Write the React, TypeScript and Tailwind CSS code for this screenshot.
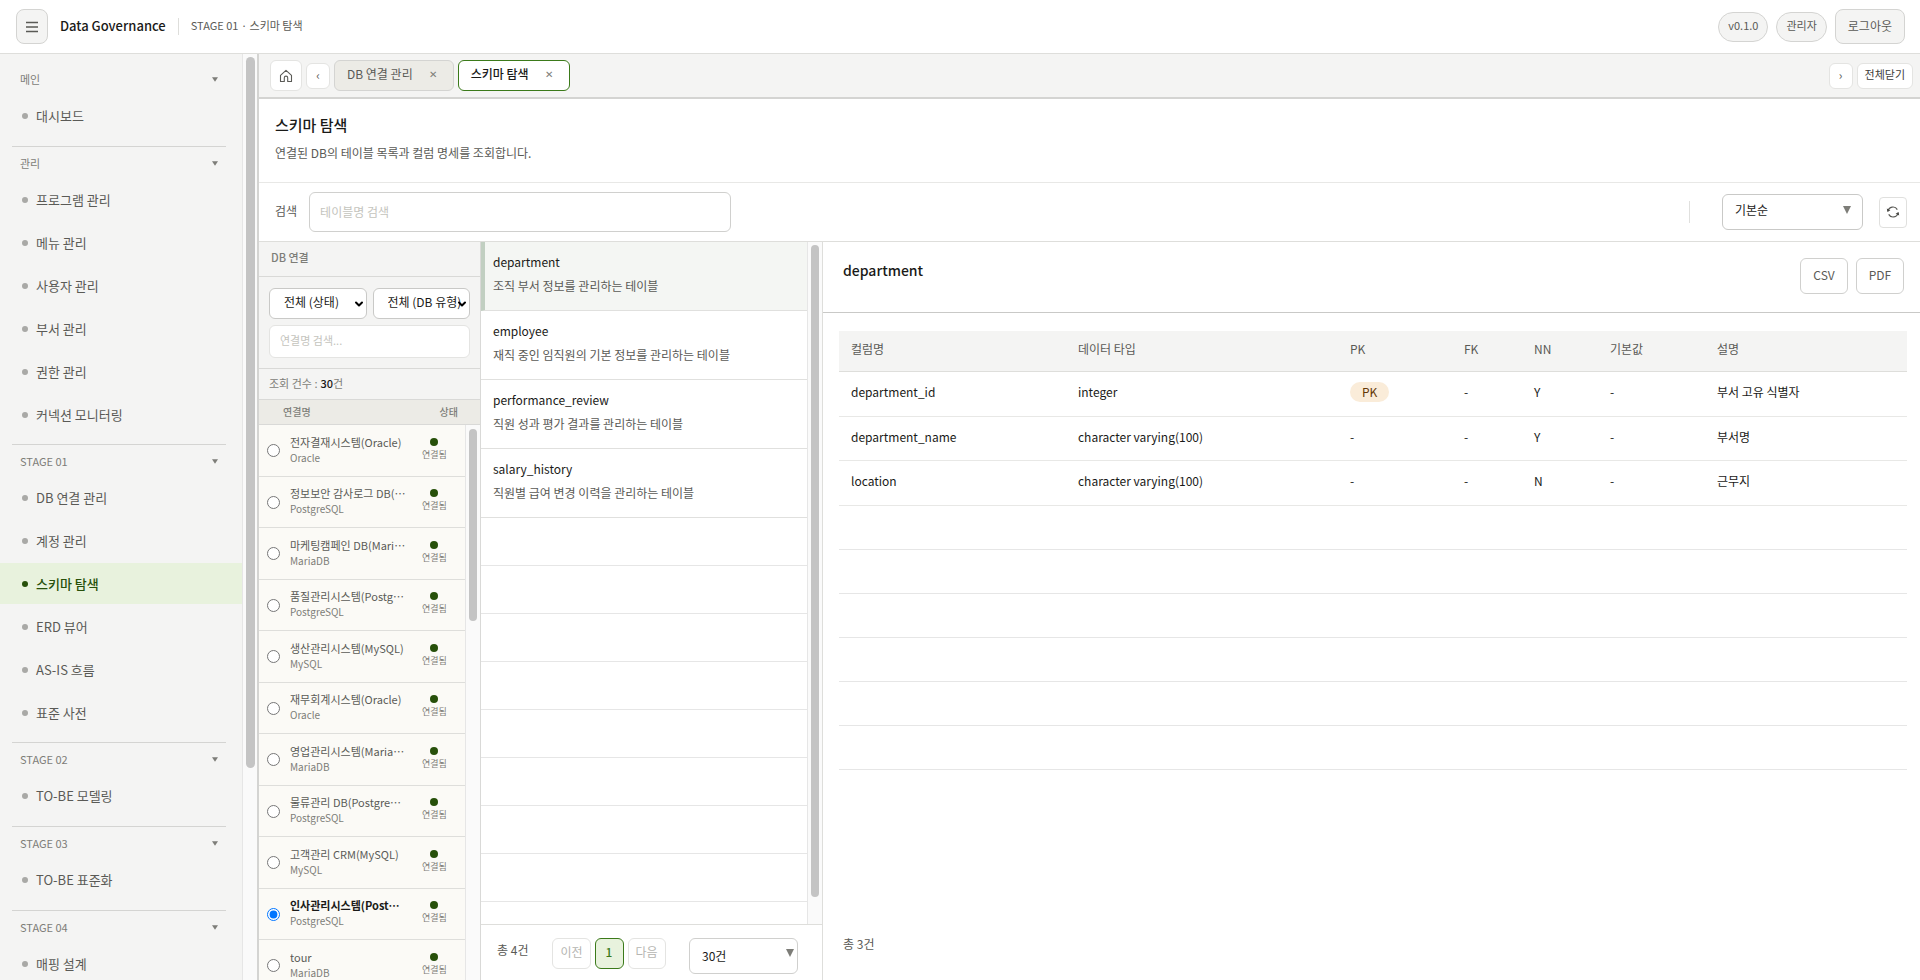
import { ChevronDown } from 'lucide-react';

const MENU = [
  { label: '메인', items: ['대시보드'] },
  {
    label: '관리',
    items: ['프로그램 관리', '메뉴 관리', '사용자 관리', '부서 관리', '권한 관리', '커넥션 모니터링'],
  },
  {
    label: 'STAGE 01',
    items: ['DB 연결 관리', '계정 관리', '스키마 탐색', 'ERD 뷰어', 'AS-IS 흐름', '표준 사전'],
  },
  { label: 'STAGE 02', items: ['TO-BE 모델링'] },
  { label: 'STAGE 03', items: ['TO-BE 표준화'] },
  { label: 'STAGE 04', items: ['매핑 설계'] },
];

const CONNECTIONS = [
  { name: '전자결재시스템(Oracle)', type: 'Oracle' },
  { name: '정보보안 감사로그 DB(PostgreSQL)', type: 'PostgreSQL' },
  { name: '마케팅캠페인 DB(MariaDB)', type: 'MariaDB' },
  { name: '품질관리시스템(PostgreSQL)', type: 'PostgreSQL' },
  { name: '생산관리시스템(MySQL)', type: 'MySQL' },
  { name: '재무회계시스템(Oracle)', type: 'Oracle' },
  { name: '영업관리시스템(MariaDB)', type: 'MariaDB' },
  { name: '물류관리 DB(PostgreSQL)', type: 'PostgreSQL' },
  { name: '고객관리 CRM(MySQL)', type: 'MySQL' },
  { name: '인사관리시스템(PostgreSQL)', type: 'PostgreSQL' },
  { name: 'tour', type: 'MariaDB' },
];

const TABLES = [
  { name: 'department', desc: '조직 부서 정보를 관리하는 테이블' },
  { name: 'employee', desc: '재직 중인 임직원의 기본 정보를 관리하는 테이블' },
  { name: 'performance_review', desc: '직원 성과 평가 결과를 관리하는 테이블' },
  { name: 'salary_history', desc: '직원별 급여 변경 이력을 관리하는 테이블' },
];

const COLUMNS = [
  { name: 'department_id', type: 'integer', pk: true, nn: 'Y', desc: '부서 고유 식별자' },
  { name: 'department_name', type: 'character varying(100)', pk: false, nn: 'Y', desc: '부서명' },
  { name: 'location', type: 'character varying(100)', pk: false, nn: 'N', desc: '근무지' },
];

function Sidebar() {
  return (
    <aside className="flex w-[257px] shrink-0 bg-[#f4f4f3]">
      <nav className="flex-1 overflow-hidden pt-2">
        {MENU.map((group, i) => (
          <div key={group.label} className={group.items.length > 1 ? 'pb-[9px]' : 'pb-[10px]'}>
            <div className={i > 0 ? 'ml-3 mr-4 border-t border-[#d4d4d2]' : 'ml-3 mr-4 border-t border-transparent'}>
              <button className="flex h-8 w-full items-center justify-between px-2 text-[11px] text-[#7d7d78]">
                {group.label}
                <svg viewBox="0 0 8 6" className="h-[5px] w-[6px] fill-[#7d7d78]">
                  <path d="M0 0h8L4 6z" />
                </svg>
              </button>
            </div>
            <ul className="flex flex-col gap-[2px]">
              {group.items.map((item) => {
                const active = item === '스키마 탐색';
                return (
                  <li key={item}>
                    <a
                      href="#"
                      className={`flex h-[41px] items-center gap-2 pl-[22px] text-[13px] ${
                        active ? 'bg-[#e8f2dd] font-medium text-[#27500a]' : 'text-[#5a5a56]'
                      }`}
                    >
                      <span className={`size-[6px] rounded-full ${active ? 'bg-[#27500a]' : 'bg-[#a9a9a6]'}`} />
                      {item}
                    </a>
                  </li>
                );
              })}
            </ul>
          </div>
        ))}
      </nav>
      <div className="w-[15px] shrink-0 border-l border-[#e6e6e6] bg-[#fafafa] pt-[3px] pl-[3px]">
        <div className="h-[77%] w-[9px] rounded-full bg-[#c4c4c4]" />
      </div>
    </aside>
  );
}

function TabBar() {
  return (
    <div className="flex h-[45px] shrink-0 items-center gap-1 border-b-2 border-[#d4d4d2] bg-[#f4f4f3] pl-[11px] pr-[7px]">
      <button aria-label="홈" className="flex h-[31px] w-8 items-center justify-center rounded-md border border-[#e4e4e2] bg-white">
        <svg viewBox="0 0 14 14" className="size-[14px] fill-none stroke-[#5a5a56]" strokeWidth="1.1" strokeLinejoin="round" strokeLinecap="round">
          <path d="M1.5 6.3 7 1.3l5.5 5v6.2H8.7V8.8a1.7 1.7 0 0 0-3.4 0v3.7H1.5z" />
        </svg>
      </button>
      <button className="flex h-[26px] w-[24px] items-center justify-center rounded-md border border-[#e4e4e2] bg-white pb-[2px] text-xs text-[#5a5a56]">‹</button>
      <div className="flex h-[31px] items-center gap-4 rounded-md border border-[#d4d4d2] bg-[#ecebe6] pb-[3px] pl-3 pr-4 text-xs text-[#5a5a56]">
        DB 연결 관리
        <button aria-label="DB 연결 관리 닫기" className="text-[10px] text-[#7d7d78]">✕</button>
      </div>
      <div className="flex h-[31px] items-center gap-4 rounded-md border border-[#3b7a1a] bg-white pb-[3px] pl-3 pr-4 text-xs font-medium text-[#1a1a18]">
        스키마 탐색
        <button aria-label="스키마 탐색 닫기" className="text-[10px] font-normal text-[#7d7d78]">✕</button>
      </div>
      <button className="ml-auto flex h-[26px] w-[24px] items-center justify-center rounded-md border border-[#e4e4e2] bg-white pb-[2px] text-xs text-[#5a5a56]">›</button>
      <button className="h-[26px] rounded-md border border-[#e4e4e2] bg-white px-[7px] pb-[3px] text-[11px] text-[#3c3c39]">전체닫기</button>
    </div>
  );
}

function Connections() {
  return (
    <section className="flex w-[222px] shrink-0 flex-col border-r border-[#d9d9d7] bg-[#f4f4f3]">
      <h2 className="flex h-[35px] shrink-0 items-center border-b border-[#d9d9d7] pb-1 pl-3 text-[11px] font-medium text-[#7d7d78]">DB 연결</h2>
      <div className="grid shrink-0 grid-cols-2 gap-[6px] border-b border-[#d9d9d7] px-[10px] pt-[11px] pb-[10px]">
        {['전체 (상태)', '전체 (DB 유형)'].map((label) => (
          <div key={label} className="relative">
            <select aria-label={label} className="h-[31px] w-full appearance-none rounded-md border border-[#c9c9c7] bg-white pb-[3px] pl-[14px] text-xs text-[#1a1a18]">
              <option>{label}</option>
            </select>
            <ChevronDown className="pointer-events-none absolute top-[10px] right-[2px] size-3 text-black" strokeWidth={4} />
          </div>
        ))}
        <input
          aria-label="연결명 검색"
          placeholder="연결명 검색..."
          className="col-span-2 h-[33px] w-full rounded-md border border-[#e4e4e2] bg-white px-[10px] pb-[3px] text-[11px] placeholder:text-[#c4c4bd]"
        />
      </div>
      <p className="flex h-[31px] shrink-0 items-center border-b border-[#d9d9d7] pb-px pl-[10px] text-[11px] text-[#7d7d78]">
        조회 건수 : <strong className="ml-[3px] font-medium text-[#1a1a18]">30</strong>건
      </p>
      <div className="flex h-[25px] shrink-0 items-center justify-between border-b border-[#d9d9d7] bg-[#ecebe6] pb-[2px] pl-6 pr-[22px] text-[10px] font-medium text-[#7d7d78]">
        <span>연결명</span>
        <span>상태</span>
      </div>
      <div className="flex min-h-0 flex-1">
        <ul className="min-w-0 flex-1 overflow-hidden bg-[#fbfaf6]">
          {CONNECTIONS.map((c) => {
            const checked = c.name.startsWith('인사');
            return (
              <li key={c.name} className="border-b border-[#dededb] odd:h-[52px] even:h-[51px]">
                <label className="flex h-full items-center pl-2">
                  <input type="radio" name="connection" defaultChecked={checked} className="size-[13px] shrink-0" />
                  <span className="mr-4 ml-[10px] flex w-[116px] flex-col pb-1">
                    <span className={`truncate text-[11px] leading-[18px] ${checked ? 'font-bold text-[#1a1a18]' : 'text-[#5a5a56]'}`}>{c.name}</span>
                    <span className="text-[10px] leading-[14px] text-[#7d7d78]">{c.type}</span>
                  </span>
                  <span className="flex flex-col items-center gap-[2px] pb-[2px] text-[9px] leading-[14px] text-[#7d7d78]">
                    <span className="size-2 rounded-full bg-[#27500a]" />
                    연결됨
                  </span>
                </label>
              </li>
            );
          })}
        </ul>
        <div className="w-[15px] shrink-0 border-l border-[#e6e6e6] bg-[#fafafa] pt-1 pl-[3px]">
          <div className="h-[192px] w-2 rounded-full bg-[#c4c4c4]" />
        </div>
      </div>
    </section>
  );
}

function TableList() {
  return (
    <section className="flex w-[342px] shrink-0 flex-col border-r border-[#dededb]">
      <div className="flex min-h-0 flex-1">
        <ul className="flex-1 overflow-hidden">
          {TABLES.map((t, i) => (
            <li
              key={t.name}
              className={`flex h-[69px] flex-col justify-center gap-1 border-b border-[#e0e0de] pb-1 ${
                i === 0 ? 'border-l-4 border-l-[#c1cfc1] bg-[#f4f6f3] pl-2' : 'pl-3'
              }`}
            >
              <span className="text-xs leading-5 text-[#1a1a18]">{t.name}</span>
              <span className="text-xs leading-5 text-[#5a5a56]">{t.desc}</span>
            </li>
          ))}
          {Array.from({ length: 8 }, (_, i) => (
            <li key={i} className="h-12 border-b border-[#e6e6e6]" />
          ))}
        </ul>
        <div className="w-[15px] shrink-0 border-l border-[#e6e6e6] bg-[#fafafa] pt-[3px] pl-[3px]">
          <div className="h-[96%] w-2 rounded-full bg-[#c4c4c4]" />
        </div>
      </div>
      <div className="flex h-14 shrink-0 items-start gap-1 border-t border-[#dededb] px-4 pt-[13px] text-xs text-[#5a5a56]">
        <span className="mr-5 pt-1">총 4건</span>
        <button disabled className="h-[31px] rounded-md border border-[#e4e4e2] px-[7px] pb-[3px] text-[#b5b5b1]">이전</button>
        <button className="h-[31px] w-[29px] rounded-md border border-[#3b7a1a] bg-[#e8f2dd] pb-[3px] font-medium text-[#3b7a1a]">1</button>
        <button disabled className="h-[31px] rounded-md border border-[#e4e4e2] px-[7px] pb-[3px] text-[#b5b5b1]">다음</button>
        <div className="relative ml-auto mr-2 w-[109px]">
          <select aria-label="페이지 크기" className="h-9 w-full appearance-none rounded-md border border-[#d0d0ce] bg-white pl-3 text-xs text-[#1a1a18]">
            <option>30건</option>
          </select>
          <svg viewBox="0 0 8 8" className="pointer-events-none absolute top-[11px] right-1 size-2 fill-[#7d7d78]">
            <path d="M0 0h8L4 8z" />
          </svg>
        </div>
      </div>
    </section>
  );
}

function Detail() {
  return (
    <section className="flex min-w-0 flex-1 flex-col">
      <div className="flex h-[71px] shrink-0 items-start border-b border-[#c9c9c7] pl-5 pr-4 pt-4">
        <h2 className="text-sm leading-6 font-medium text-[#1a1a18]">department</h2>
        <div className="ml-auto flex gap-2 text-xs text-[#5a5a56]">
          <button className="h-9 w-12 rounded-md border border-[#d0d0ce] pb-[3px]">CSV</button>
          <button className="h-9 w-12 rounded-md border border-[#d0d0ce] pb-[3px]">PDF</button>
        </div>
      </div>
      <div className="flex-1 pt-[18px] pr-[13px] pl-4">
        <table className="w-full table-fixed border-collapse text-left text-xs text-[#1a1a18]">
          <colgroup>
            <col className="w-[227px]" />
            <col className="w-[272px]" />
            <col className="w-[114px]" />
            <col className="w-[70px]" />
            <col className="w-[76px]" />
            <col className="w-[107px]" />
            <col />
          </colgroup>
          <thead>
            <tr className="h-10 border-b border-[#dededb] bg-[#f4f4f3] text-[#5a5a56]">
              {['컬럼명', '데이터 타입', 'PK', 'FK', 'NN', '기본값', '설명'].map((h) => (
                <th key={h} className="px-3 pb-1 font-normal">{h}</th>
              ))}
            </tr>
          </thead>
          <tbody>
            {COLUMNS.map((c) => (
              <tr key={c.name} className="border-b border-[#e8e8e6] odd:h-[45px] even:h-11">
                <td className="px-3 pb-[3px]">{c.name}</td>
                <td className="px-3 pb-[3px]">{c.type}</td>
                <td className="px-3 pb-[3px]">
                  {c.pk ? <span className="inline-block rounded-full bg-[#faecd9] px-3 leading-5 text-[#633806]">PK</span> : '-'}
                </td>
                <td className="px-3 pb-[3px]">-</td>
                <td className="px-3 pb-[3px]">{c.nn}</td>
                <td className="px-3 pb-[3px]">-</td>
                <td className="px-3 pb-[3px]">{c.desc}</td>
              </tr>
            ))}
            {Array.from({ length: 6 }, (_, i) => (
              <tr key={i} className="h-11 border-b border-[#e6e6e6]">
                <td colSpan={7} />
              </tr>
            ))}
          </tbody>
        </table>
      </div>
      <p className="pb-7 pl-5 text-xs text-[#5a5a56]">총 3건</p>
    </section>
  );
}

export default function App() {
  return (
    <div className="flex h-screen flex-col overflow-hidden bg-white font-['Noto_Sans_CJK_KR',sans-serif]">
      <header className="flex h-[54px] shrink-0 items-center border-b border-[#dededb] pr-[15px] pl-4">
        <button aria-label="메뉴" className="flex h-[35px] w-8 items-center justify-center rounded-lg border border-[#d4d4d2] bg-[#f4f4f3]">
          <svg viewBox="0 0 12 12" className="size-3 stroke-[#5a5a56]" strokeWidth="1.3">
            <path d="M0 1.5h12M0 6h12M0 10.5h12" />
          </svg>
        </button>
        <h1 className="ml-3 pb-[2px] text-[13px] font-medium text-[#1a1a18]">Data Governance</h1>
        <div className="ml-3 h-[17px] w-px bg-[#dededb]" />
        <span className="ml-3 pb-[2px] text-[11px] text-[#5a5a56]">STAGE 01 · 스키마 탐색</span>
        <div className="ml-auto flex items-center gap-2 text-[#5a5a56]">
          <span className="flex h-[30px] items-center rounded-full border border-[#d4d4d2] bg-[#f4f4f3] px-[9px] pb-[2px] text-[11px]">v0.1.0</span>
          <span className="flex h-[30px] items-center rounded-full border border-[#d4d4d2] bg-[#f4f4f3] px-[9px] pb-[2px] text-[11px]">관리자</span>
          <button className="h-[35px] rounded-lg border border-[#d4d4d2] bg-[#f4f4f3] px-3 pb-[2px] text-xs">로그아웃</button>
        </div>
      </header>

      <div className="flex min-h-0 flex-1">
        <Sidebar />
        <main className="flex min-w-0 flex-1 flex-col border-l-2 border-[#d4d4d2]">
          <TabBar />
          <div className="h-[84px] shrink-0 border-b border-[#e8e8e6] pt-4 pl-4">
            <h2 className="text-[15px] leading-5 font-medium text-[#1a1a18]">스키마 탐색</h2>
            <p className="mt-2 text-xs leading-5 text-[#5a5a56]">연결된 DB의 테이블 목록과 컬럼 명세를 조회합니다.</p>
          </div>
          <div className="flex h-[59px] shrink-0 items-center border-b border-[#dededb] pr-[13px] pl-4">
            <label htmlFor="table-search" className="pb-[2px] text-xs text-[#5a5a56]">검색</label>
            <input
              id="table-search"
              placeholder="테이블명 검색"
              className="ml-3 h-10 w-[422px] rounded-md border border-[#d0d0ce] px-[10px] pb-[2px] text-xs placeholder:text-[#c4c4bd]"
            />
            <div className="ml-auto h-[22px] w-px bg-[#e0e0de]" />
            <div className="relative ml-8 w-[141px]">
              <select aria-label="정렬" className="block h-9 w-full appearance-none rounded-md border border-[#c9c9c7] bg-white pb-1 pl-3 text-xs text-[#1a1a18]">
                <option>기본순</option>
              </select>
              <svg viewBox="0 0 8 8" className="pointer-events-none absolute top-3 right-3 size-2 fill-[#7d7d78]">
                <path d="M0 0h8L4 8z" />
              </svg>
            </div>
            <button aria-label="새로고침" className="ml-4 flex h-[31px] w-7 items-center justify-center rounded border border-[#e0e0de]">
              <svg viewBox="0 0 14 14" className="size-[14px] fill-none stroke-[#5a5a56]" strokeWidth="1.2">
                <path d="M2 6.2A5 5 0 0 1 11.3 4.6M12 7.8A5 5 0 0 1 2.7 9.4" />
                <path d="M.8 3.4 1.4 7l3-1.8zM13.2 10.6 12.6 7 9.6 8.8z" className="fill-[#4a4a46] stroke-none" />
              </svg>
            </button>
          </div>
          <div className="flex min-h-0 flex-1">
            <Connections />
            <TableList />
            <Detail />
          </div>
        </main>
      </div>
    </div>
  );
}
